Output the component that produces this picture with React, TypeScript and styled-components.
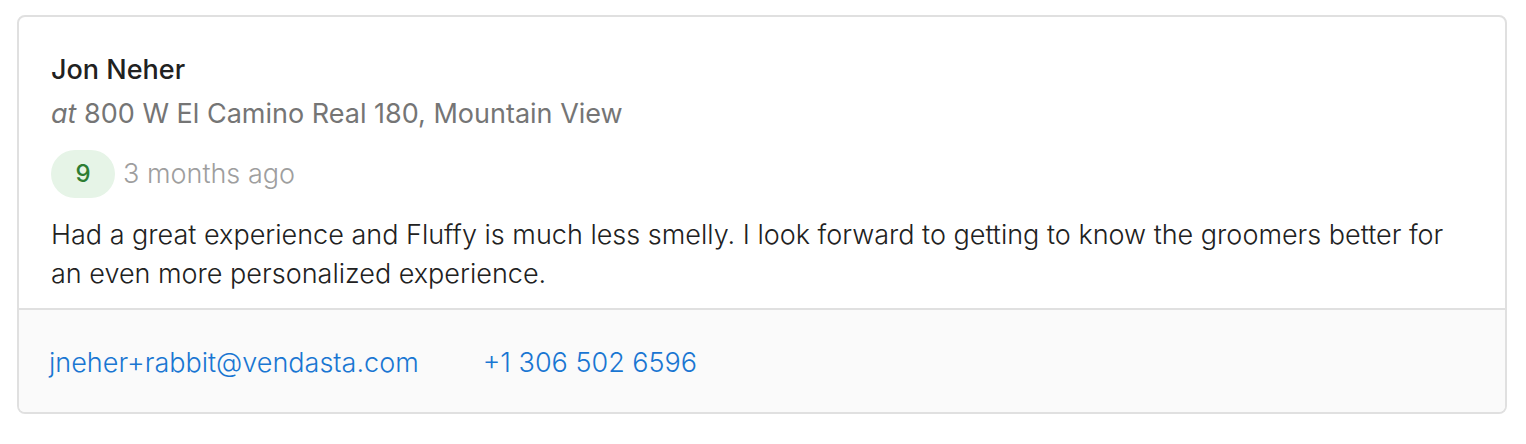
import React from "react";
import styled, { createGlobalStyle } from "styled-components";

const GlobalStyle = createGlobalStyle`
  *, *::before, *::after { box-sizing: border-box; }
  body {
    margin: 0;
    background: #ffffff;
    color: #212121;
    font-family: Inter, "Liberation Sans", sans-serif;
    font-size: 27px;
    line-height: 40px;
  }
`;

const Page = styled.main`
  padding: 15px 19px 30px 17px;
`;

const Card = styled.article`
  overflow: hidden;
  border: 2px solid #e0e0e0;
  border-radius: 8px;
  background: #ffffff;
`;

const Review = styled.div`
  padding: 33px 32px 15px;
`;

const Name = styled.h2`
  margin: 0;
  font-size: 27px;
  font-weight: 500;
  line-height: 40px;
`;

const Address = styled.p`
  margin: 4px 0 0;
  color: #757575;
`;

const Meta = styled.div`
  display: flex;
  align-items: center;
  gap: 8px;
  margin-top: 16px;
  color: #9e9e9e;
  font-weight: 300;
`;

const Score = styled.span`
  width: 64px;
  border-radius: 24px;
  background: #e6f4e7;
  color: #2e7d32;
  font-size: 24px;
  font-weight: 500;
  line-height: 48px;
  text-align: center;
`;

const Comment = styled.p`
  margin: 17px 0 0;
  font-weight: 300;
  line-height: 39px;
`;

const Contacts = styled.footer`
  display: flex;
  flex-wrap: wrap;
  gap: 0 64px;
  padding: 33px 30px 29px;
  border-top: 2px solid #e0e0e0;
  background: #fafafa;
`;

const ContactLink = styled.a`
  color: #1976d2;
  font-weight: 300;
  text-decoration: none;
`;

export default function App() {
  return (
    <>
      <GlobalStyle />
      <Page>
        <Card>
          <Review>
            <Name>Jon Neher</Name>
            <Address>
              <em>at</em> 800 W El Camino Real 180, Mountain View
            </Address>
            <Meta>
              <Score>9</Score>
              <time>3 months ago</time>
            </Meta>
            <Comment>
              Had a great experience and Fluffy is much less smelly. I look forward to getting to
              know the groomers better for an even more personalized experience.
            </Comment>
          </Review>
          <Contacts>
            <ContactLink href="mailto:jneher+rabbit@vendasta.com">jneher+rabbit@vendasta.com</ContactLink>
            <ContactLink href="tel:+13065026596">+1 306 502 6596</ContactLink>
          </Contacts>
        </Card>
      </Page>
    </>
  );
}
